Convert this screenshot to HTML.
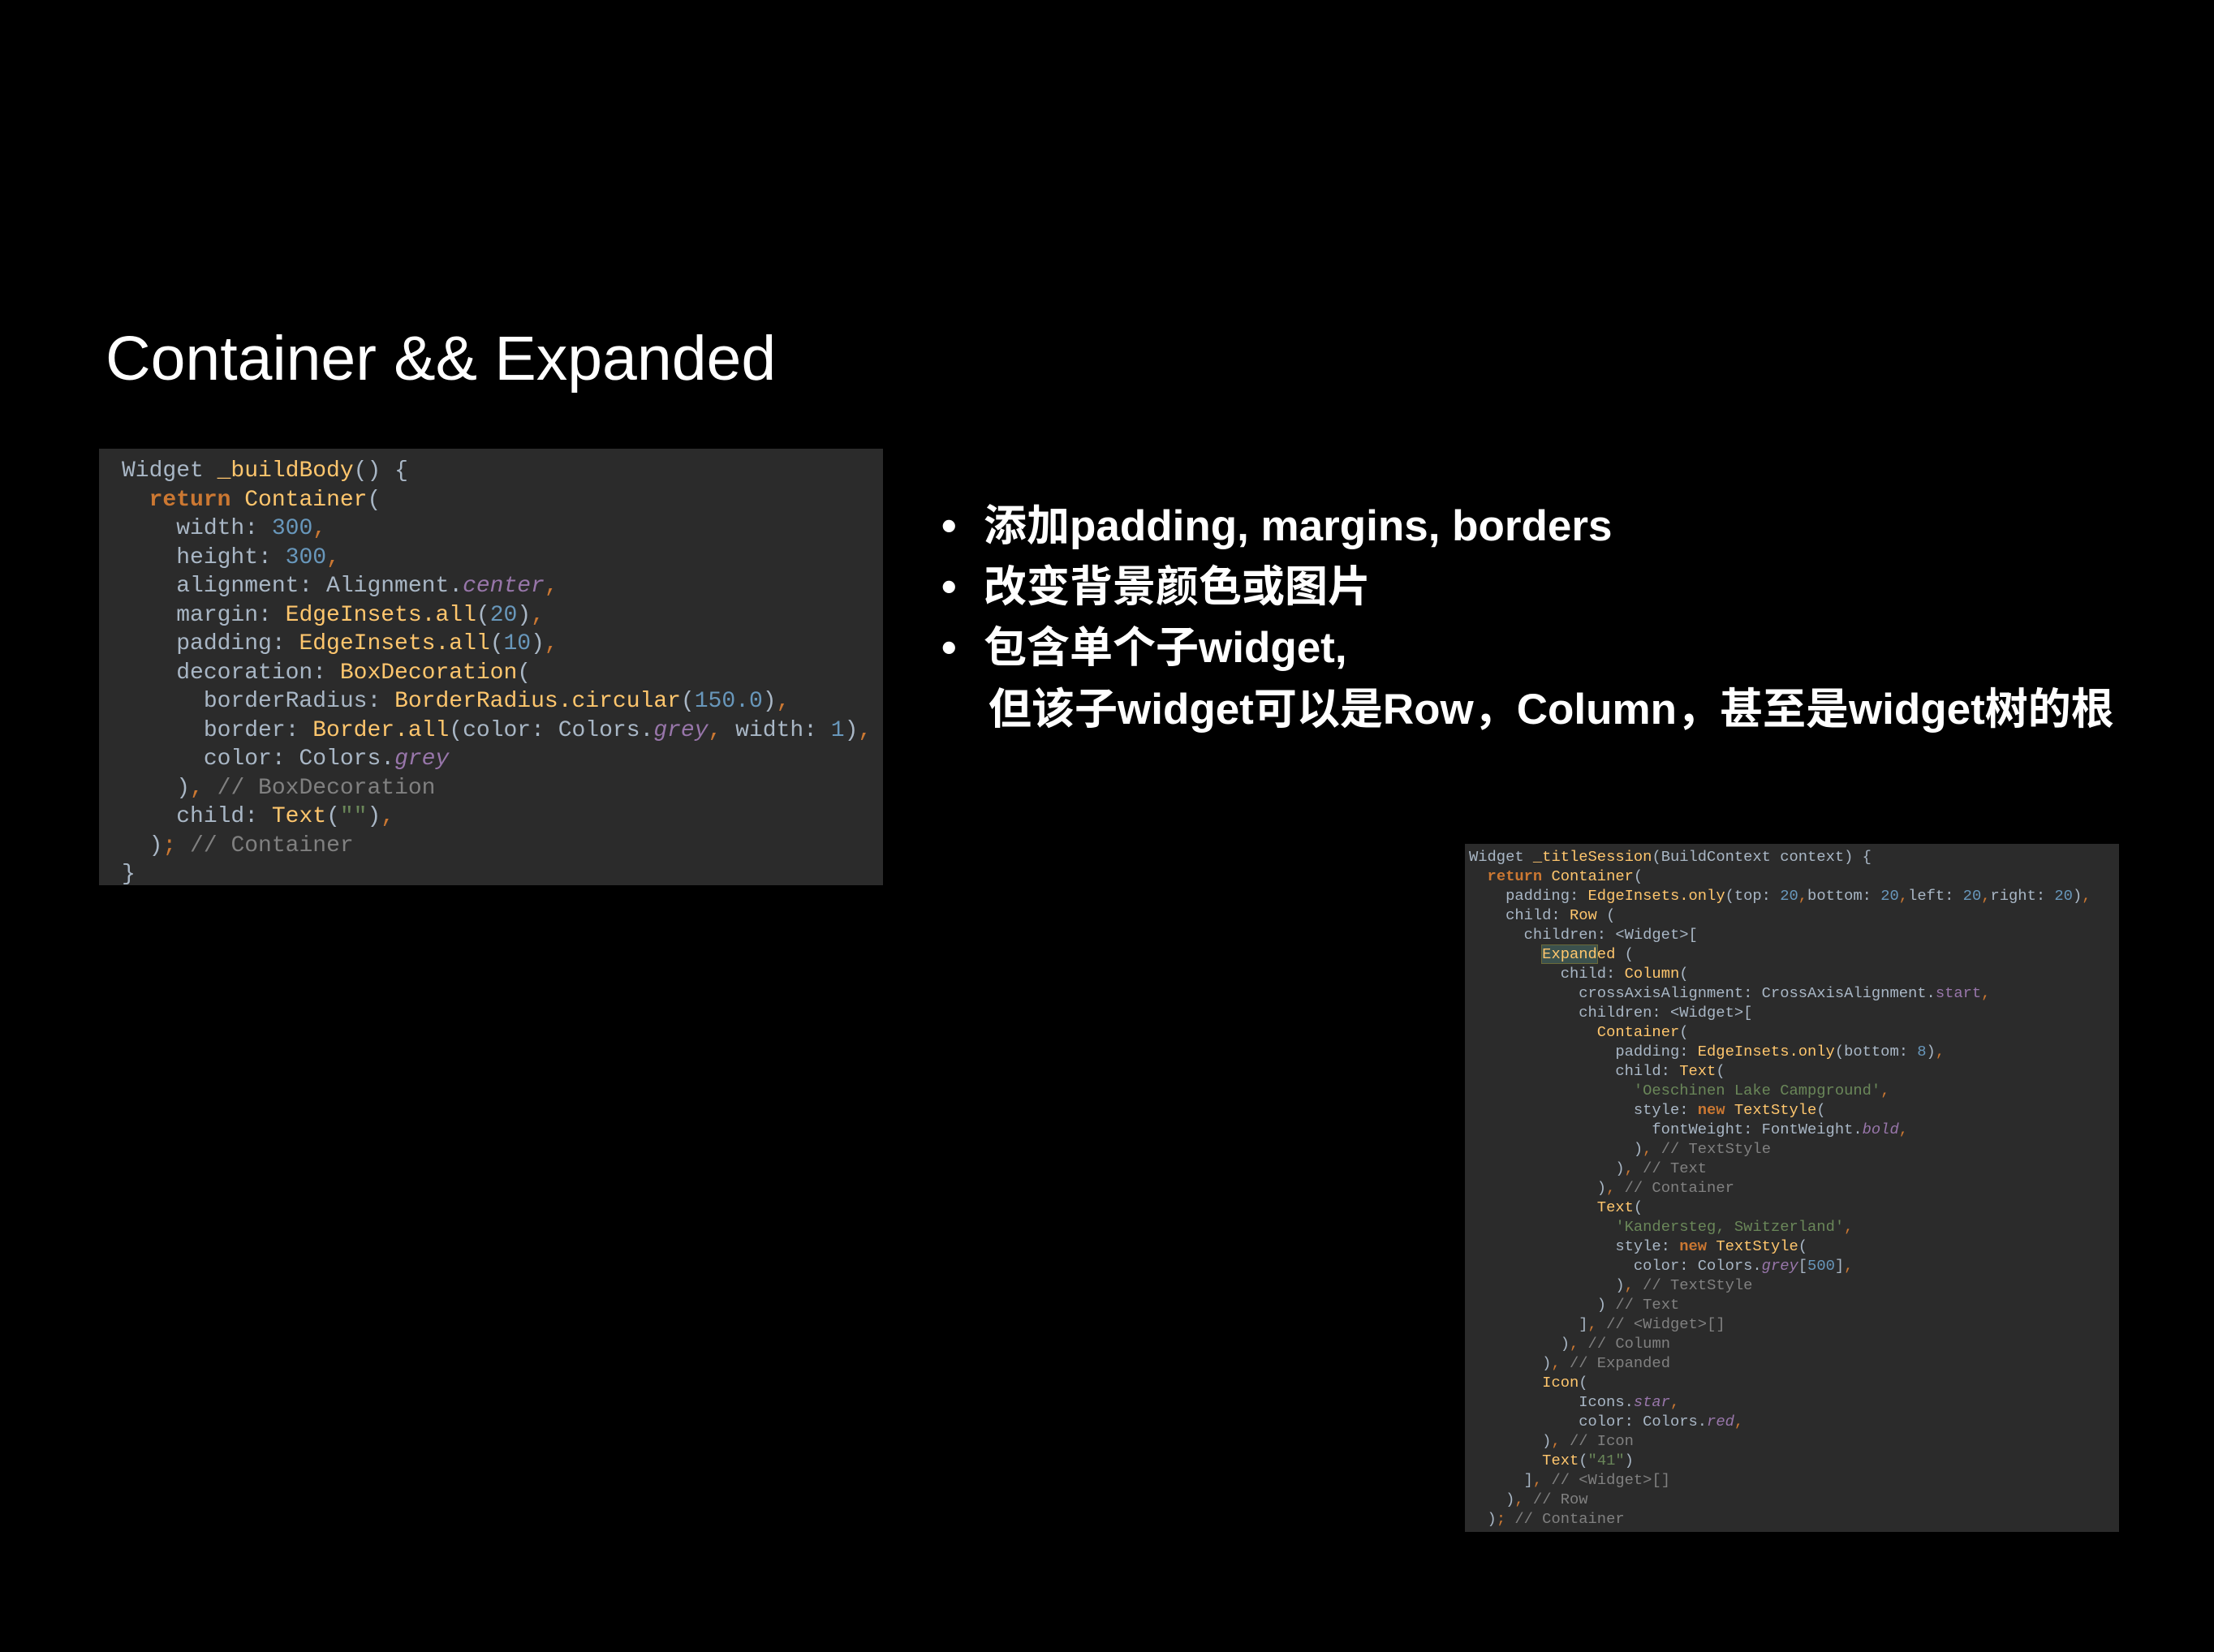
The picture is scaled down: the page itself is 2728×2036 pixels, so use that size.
<!DOCTYPE html>
<html><head><meta charset="utf-8"><style>
body{margin:0;width:2728px;height:2036px;background:#000;position:relative;overflow:hidden;font-family:"Liberation Sans","Noto Sans CJK SC",sans-serif;}
.t{position:absolute;left:130px;top:397px;font-size:77px;color:#fff;white-space:nowrap;line-height:90px;}
pre{margin:0;position:absolute;background:#2b2b2b;font-family:"Liberation Mono","DejaVu Sans Mono",monospace;color:#a9b7c6;white-space:pre;}
.a{left:122px;top:553px;width:966px;height:538px;font-size:28px;line-height:35.5px;box-sizing:border-box;padding:10px 0 0 28px;}
.b{left:1805px;top:1040px;width:806px;height:848px;font-size:18.8px;line-height:24px;box-sizing:border-box;padding:4px 0 0 5px;}
.k{color:#cc7832;font-weight:bold}.y{color:#ffc66d}.n{color:#6897bb}.p{color:#9876aa;font-style:italic}.c{color:#808080}.s{color:#6a8759}.o{color:#cc7832}
.hl{background:#3b514d;outline:1px solid #6a6a3a}
.bl{position:absolute;left:1160px;color:#fff;font-weight:bold;font-size:53px;white-space:nowrap;line-height:70px;}
.bl i{font-style:normal;position:absolute;left:0}
</style></head><body>
<div class="t">Container &amp;&amp; Expanded</div>
<pre class="a">Widget <span class="y">_buildBody</span>() {
  <span class="k">return</span> <span class="y">Container</span>(
    width: <span class="n">300</span><span class="o">,</span>
    height: <span class="n">300</span><span class="o">,</span>
    alignment: Alignment.<span class="p">center</span><span class="o">,</span>
    margin: <span class="y">EdgeInsets.all</span>(<span class="n">20</span>)<span class="o">,</span>
    padding: <span class="y">EdgeInsets.all</span>(<span class="n">10</span>)<span class="o">,</span>
    decoration: <span class="y">BoxDecoration</span>(
      borderRadius: <span class="y">BorderRadius.circular</span>(<span class="n">150.0</span>)<span class="o">,</span>
      border: <span class="y">Border.all</span>(color: Colors.<span class="p">grey</span><span class="o">,</span> width: <span class="n">1</span>)<span class="o">,</span>
      color: Colors.<span class="p">grey</span>
    )<span class="o">,</span> <span class="c">// BoxDecoration</span>
    child: <span class="y">Text</span>(<span class="s">""</span>)<span class="o">,</span>
  )<span class="o">;</span> <span class="c">// Container</span>
}</pre>
<div class="bl" style="top:614px"><i>•</i><span style="margin-left:52px">添加padding, margins, borders</span></div>
<div class="bl" style="top:689px"><i>•</i><span style="margin-left:52px">改变背景颜色或图片</span></div>
<div class="bl" style="top:764px"><i>•</i><span style="margin-left:52px">包含单个子widget,</span></div>
<div class="bl" style="top:840px"><span style="margin-left:58px">但该子widget可以是Row，Column，甚至是widget树的根</span></div>
<pre class="b">Widget <span class="y">_titleSession</span>(BuildContext context) {
  <span class="k">return</span> <span class="y">Container</span>(
    padding: <span class="y">EdgeInsets.only</span>(top: <span class="n">20</span><span class="o">,</span>bottom: <span class="n">20</span><span class="o">,</span>left: <span class="n">20</span><span class="o">,</span>right: <span class="n">20</span>)<span class="o">,</span>
    child: <span class="y">Row</span> (
      children: &lt;Widget&gt;[
        <span class="y"><span class="hl">Expand</span>ed</span> (
          child: <span class="y">Column</span>(
            crossAxisAlignment: CrossAxisAlignment.<span class="p" style="font-style:normal">start</span><span class="o">,</span>
            children: &lt;Widget&gt;[
              <span class="y">Container</span>(
                padding: <span class="y">EdgeInsets.only</span>(bottom: <span class="n">8</span>)<span class="o">,</span>
                child: <span class="y">Text</span>(
                  <span class="s">'Oeschinen Lake Campground'</span><span class="o">,</span>
                  style: <span class="k">new</span> <span class="y">TextStyle</span>(
                    fontWeight: FontWeight.<span class="p">bold</span><span class="o">,</span>
                  )<span class="o">,</span> <span class="c">// TextStyle</span>
                )<span class="o">,</span> <span class="c">// Text</span>
              )<span class="o">,</span> <span class="c">// Container</span>
              <span class="y">Text</span>(
                <span class="s">'Kandersteg, Switzerland'</span><span class="o">,</span>
                style: <span class="k">new</span> <span class="y">TextStyle</span>(
                  color: Colors.<span class="p">grey</span>[<span class="n">500</span>]<span class="o">,</span>
                )<span class="o">,</span> <span class="c">// TextStyle</span>
              ) <span class="c">// Text</span>
            ]<span class="o">,</span> <span class="c">// &lt;Widget&gt;[]</span>
          )<span class="o">,</span> <span class="c">// Column</span>
        )<span class="o">,</span> <span class="c">// Expanded</span>
        <span class="y">Icon</span>(
            Icons.<span class="p">star</span><span class="o">,</span>
            color: Colors.<span class="p">red</span><span class="o">,</span>
        )<span class="o">,</span> <span class="c">// Icon</span>
        <span class="y">Text</span>(<span class="s">"41"</span>)
      ]<span class="o">,</span> <span class="c">// &lt;Widget&gt;[]</span>
    )<span class="o">,</span> <span class="c">// Row</span>
  )<span class="o">;</span> <span class="c">// Container</span></pre>
</body></html>
